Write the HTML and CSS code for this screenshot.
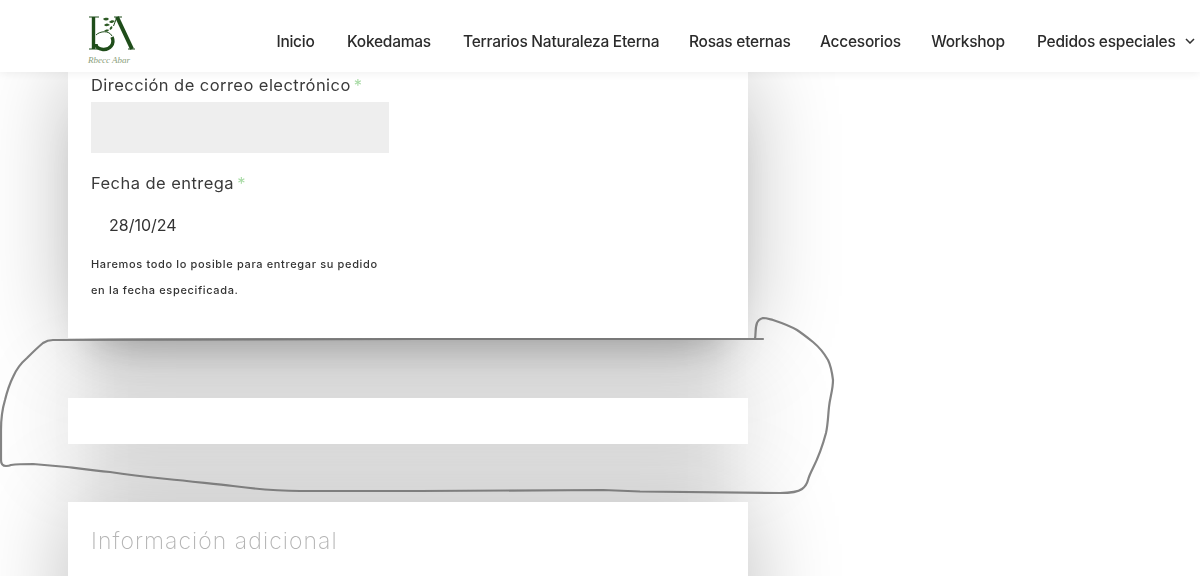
FILE: index.html
```html
<!DOCTYPE html>
<html lang="es">
<head>
<meta charset="utf-8">
<title>Finalizar compra</title>
<link rel="stylesheet" href="styles.css">
</head>
<body>
<header class="site-header">
  <a class="logo" href="#" aria-label="Logo">
    <svg width="56" height="60" viewBox="0 0 56 60">
      <g class="mono">
        <path class="thick" d="M9.5 11V43"/>
        <path class="thin" d="M5 11H15M5 43H14"/>
        <path class="thin" d="M12 29C16 25 25 24 28 30"/>
        <path class="thick" d="M28 31C31 38 26 44 19 43.5C15 43 12 41 12 38"/>
        <path class="thick-a" d="M33 11L48 43"/>
        <path class="thin" d="M33 11L29.5 20M30 11H38M44 43H51"/>
      </g>
      <g class="leaf">
        <path d="M19 13c3-2 5-1 6 0-2 2-4 2-6 0zM25 16c2-2 4-2 6-1-2 2-4 3-6 1zM20 19c2-2 4-2 6 0-2 1-4 2-6 0zM26 24c-1-2 0-3 2-4 1 2 0 3-2 4zM20 25c1-1 3-2 5-1-1 2-3 2-5 1z"/>
      </g>
      <text class="logo-sign" x="4" y="57">Rbecc Abar</text>
    </svg>
  </a>
  <nav class="nav">
    <a href="#">Inicio</a>
    <a href="#">Kokedamas</a>
    <a href="#">Terrarios Naturaleza Eterna</a>
    <a href="#">Rosas eternas</a>
    <a href="#">Accesorios</a>
    <a href="#">Workshop</a>
    <a href="#" class="has-sub">Pedidos especiales<svg width="10" height="6" viewBox="0 0 10 6"><path d="M1 1l4 4 4-4" fill="none" stroke="#333" stroke-width="1.5"/></svg></a>
  </nav>
</header>

<main class="checkout">
  <section class="card card-fields">
    <label class="label">Dirección de correo electrónico <span class="req">*</span></label>
    <div class="input"></div>
    <label class="label label-date">Fecha de entrega <span class="req">*</span></label>
    <div class="date">28/10/24</div>
    <p class="help">Haremos todo lo posible para entregar su pedido<br>en la fecha especificada.</p>
  </section>
  <section class="card card-empty"></section>
  <section class="card card-extra">
    <h2 class="extra-title">Información adicional</h2>
  </section>
</main>

<svg class="scribble" width="1200" height="576" viewBox="0 0 1200 576" aria-hidden="true">
  <path d="M763 339L420 339L53 340C49 340 46 341 43 343C37 348 32 353 27 358C20 364 16 370 13 377C9 385 7 392 5 400C2 410 1 420 1 430L1 460C1 464 3 466 6 466C8 466 9 466 11 465C18 464 25 464 33 464C45 465 56 466 67 467C82 469 96 471 110 472C130 475 148 477 167 479C190 481 212 484 233 486C256 489 278 491 300 491L420 491L603 490L640 491.5L780 493C790 493 798 492 802 489C806 486 807 484 808 480C809 476 811 472 813 468C817 460 822 448 826 433C828 424 828 416 829 407C830 397 833 390 833 380C832 372 831 366 828 360C824 353 819 347 813 342C808 338 803 334 797 330C790 326 782 323 773 320C769 319 766 318 763 318C760 319 758 320 757 323C755 328 756 333 755 339"/>
</svg>
</body>
</html>
```

FILE: styles.css
```css
* { box-sizing: border-box; }
html, body { margin: 0; height: 576px; overflow: hidden; background: #fff; }
body { font-family: "Inter", "Liberation Sans", sans-serif; color: #333; position: relative; }

.site-header {
  position: relative;
  z-index: 2;
  height: 72px;
  background: #fff;
  display: flex;
  justify-content: space-between;
  align-items: center;
  padding: 0 5px 0 84px;
  box-shadow: 0 2px 8px rgba(0, 0, 0, .06);
}
.logo { display: block; height: 60px; }
.mono path { fill: none; stroke: #1f4d1a; }
.mono .thick { stroke-width: 3.4; }
.mono .thick-a { stroke-width: 4; }
.mono .thin { stroke-width: 1; }
.leaf path { fill: #2d5a24; }
.logo-sign { font-family: "Liberation Serif", serif; font-style: italic; font-size: 9px; fill: #8ba07c; }

.nav {
  display: grid;
  grid-template-columns: 39px 88px 196px 101px 79px 78px 158px;
  column-gap: 30px;
  margin-top: 10px;
  filter: blur(.35px);
}
.nav a {
  font-size: 15.5px;
  font-weight: 500;
  color: #2b2b2b;
  letter-spacing: -.25px;
  text-decoration: none;
  white-space: nowrap;
  text-align: center;
}
.nav .has-sub { display: flex; justify-content: space-between; align-items: center; }

.checkout { width: 680px; margin-left: 68px; position: relative; z-index: 0; }
.card { background: #fff; position: relative; }
.card::before {
  content: "";
  position: absolute;
  inset: 0;
  z-index: -1;
  box-shadow: 0 0 90px rgba(0, 0, 0, .26);
}
.card-fields { height: 266px; padding: 3px 23px 0; }
.card-fields::before { box-shadow: 0 0 90px rgba(0, 0, 0, .26), 0 34px 42px -28px rgba(0, 0, 0, .3); }
.card-empty { height: 46px; margin-top: 60px; }
.card-empty::after {
  content: "";
  position: absolute;
  inset: -58px 24px;
  z-index: -1;
  background: rgba(0, 0, 0, .035);
  filter: blur(24px);
}
.card-extra { height: 200px; margin-top: 58px; padding: 22px 23px 0; }

.label { display: block; font-size: 16.5px; line-height: 20px; letter-spacing: .45px; color: #3a3a3a; filter: blur(.3px); }
.req { color: #a9dba6; margin-left: -2px; }
.input { width: 298px; height: 51px; margin-top: 7px; background: #eee; }
.label-date { margin-top: 20px; }
.date { margin: 22px 0 0 18px; font-size: 16px; line-height: 20px; color: #333; filter: blur(.3px); }
.help { margin: 16px 0 0; font-size: 11px; font-weight: 500; line-height: 26px; letter-spacing: .65px; color: #333; filter: blur(.3px); }
.extra-title { margin: 0; font-size: 23px; line-height: 34px; font-weight: 200; color: #b4b4b4; letter-spacing: 1.05px; filter: blur(.3px); }

.scribble { position: absolute; top: 0; left: 0; z-index: 1; pointer-events: none; }
.scribble path { fill: none; stroke: #6f6f6f; stroke-width: 2.2; stroke-linejoin: round; stroke-linecap: round; opacity: .85; filter: blur(.4px); }
```
